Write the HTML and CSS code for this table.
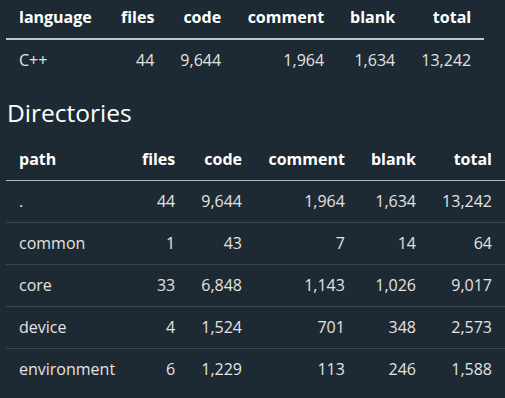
FILE: index.html
```html
<!DOCTYPE html>
<html>
<head>
    <meta charset="UTF-8">
    <title>Summary</title>
    <link rel="stylesheet" href="styles.css">
</head>
<body>
    <table class="stats first">
        <thead>
            <tr>
                <th class="col-name lang">language</th>
                <th class="col-files">files</th>
                <th class="col-code">code</th>
                <th class="col-comment">comment</th>
                <th class="col-blank">blank</th>
                <th class="col-total">total</th>
            </tr>
        </thead>
        <tbody>
            <tr>
                <td>C++</td>
                <td>44</td>
                <td>9,644</td>
                <td>1,964</td>
                <td>1,634</td>
                <td>13,242</td>
            </tr>
        </tbody>
    </table>

    <h2>Directories</h2>

    <table class="stats dirs">
        <thead>
            <tr>
                <th class="col-name path">path</th>
                <th class="col-files">files</th>
                <th class="col-code">code</th>
                <th class="col-comment">comment</th>
                <th class="col-blank">blank</th>
                <th class="col-total">total</th>
            </tr>
        </thead>
        <tbody>
            <tr>
                <td>.</td>
                <td>44</td>
                <td>9,644</td>
                <td>1,964</td>
                <td>1,634</td>
                <td>13,242</td>
            </tr>
            <tr>
                <td>common</td>
                <td>1</td>
                <td>43</td>
                <td>7</td>
                <td>14</td>
                <td>64</td>
            </tr>
            <tr>
                <td>core</td>
                <td>33</td>
                <td>6,848</td>
                <td>1,143</td>
                <td>1,026</td>
                <td>9,017</td>
            </tr>
            <tr>
                <td>device</td>
                <td>4</td>
                <td>1,524</td>
                <td>701</td>
                <td>348</td>
                <td>2,573</td>
            </tr>
            <tr>
                <td>environment</td>
                <td>6</td>
                <td>1,229</td>
                <td>113</td>
                <td>246</td>
                <td>1,588</td>
            </tr>
        </tbody>
    </table>
</body>
</html>
```

FILE: styles.css
```css
* {
    margin: 0;
    padding: 0;
    box-sizing: border-box;
}

body {
    background-color: #1e2a33;
    color: #e3e3e3;
    font-family: 'Open Sans', 'Noto Sans', sans-serif;
    font-size: 16px;
    padding: 0 0 0 6px;
    overflow: hidden;
}

.stats {
    border-collapse: collapse;
}

.stats th,
.stats td {
    padding: 10px 13px;
    line-height: 21px;
    text-align: right;
    white-space: nowrap;
}

.stats th:first-child,
.stats td:first-child {
    text-align: left;
}

.stats th {
    color: #ffffff;
    font-weight: 700;
}

.first {
    margin-top: -3px;
}

.first th {
    border-bottom: 2px solid #c4c6c8;
}

.dirs th {
    border-bottom: 1px solid #b4b9bc;
}

.dirs tbody tr + tr td {
    border-top: 1px solid #3a4750;
}

.col-name.lang { width: 102px; }
.col-name.path { width: 123px; }
.col-files { width: 59px; }
.col-code { width: 66px; }
.col-comment { width: 103px; }
.col-blank { width: 71px; }
.col-total { width: 76px; }

h2 {
    font-size: 24.5px;
    font-weight: 400;
    color: #ffffff;
    line-height: 30px;
    margin: 17px 0 11px 1px;
}
```
